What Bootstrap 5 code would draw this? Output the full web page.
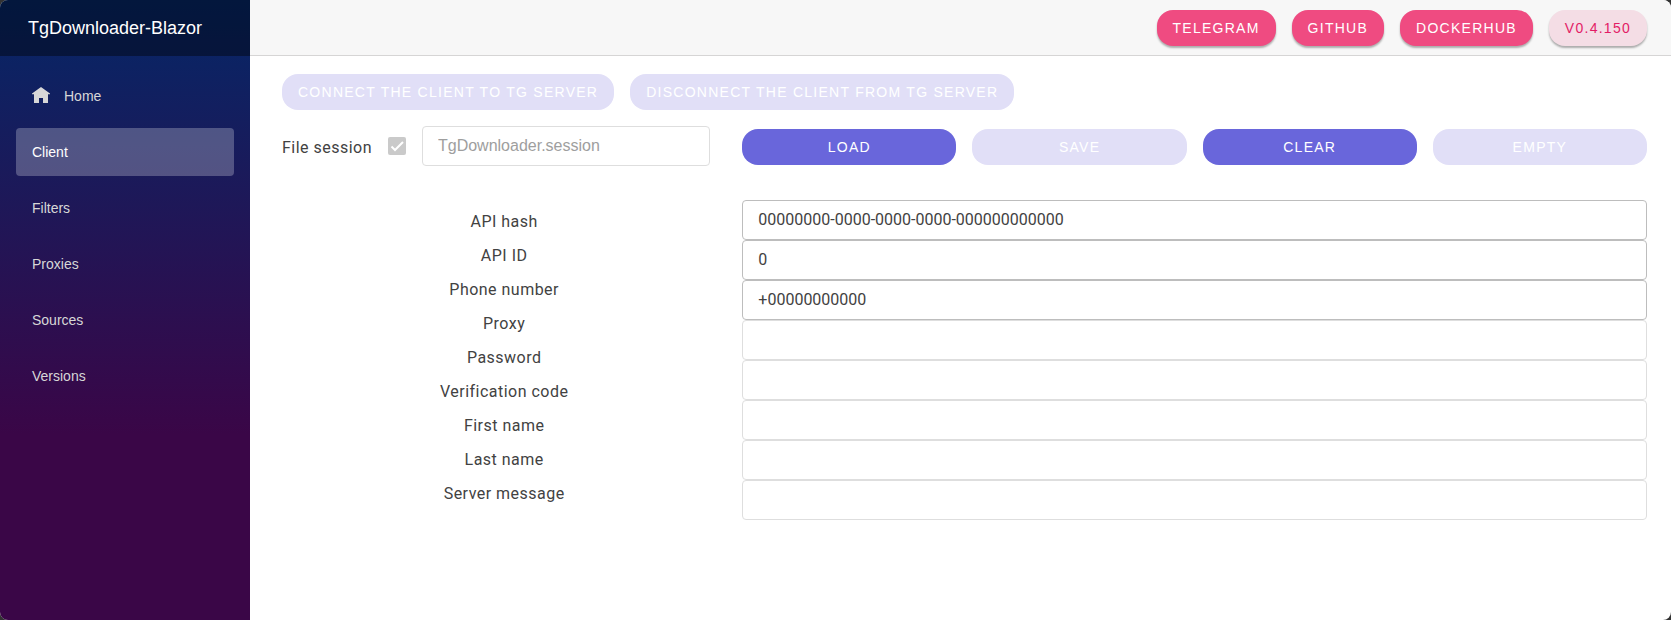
<!DOCTYPE html>
<html lang="en">
<head>
<meta charset="utf-8">
<meta name="viewport" content="width=device-width, initial-scale=1">
<title>TgDownloader-Blazor</title>
<link href="https://cdn.jsdelivr.net/npm/bootstrap@5.3.0/dist/css/bootstrap.min.css" rel="stylesheet">
<style>
  html { background: #333; }
  body { background: transparent; color: #424242; font-family: "Liberation Sans", Arial, sans-serif; }
  .shell { background: #fff; border-radius: 8px; overflow: hidden; }
  .sidebar { width: 250px; background: linear-gradient(180deg, #052767 0%, #3a0647 70%); }
  .brand-bar { height: 56px; padding: 0 28px; background: rgba(0, 0, 0, .4); font-size: 18px; }
  .side-link { height: 48px; gap: 14px; padding: 0 16px; border-radius: 4px; color: #d7d7d7; font-size: 14px; }
  .side-link:hover { color: #fff; background: rgba(255, 255, 255, .1); }
  .side-link.active { color: #fff; background: rgba(255, 255, 255, .25); }
  .top-bar { height: 56px; padding: 0 24px 0 32px; background: #f7f7f7; border-bottom: 1px solid #d6d5d5; }
  .content { padding: 18px 24px 32px 32px; }
  .pill { height: 36px; padding: 0 16px; border: 0; border-radius: 16px; font-size: 14px; line-height: 36px; letter-spacing: .09em; text-transform: uppercase; }
  .pill-link { --bs-btn-color: #fff; --bs-btn-bg: #ef4b81; --bs-btn-hover-color: #fff; --bs-btn-hover-bg: #e0366f; box-shadow: 0 2px 2px rgba(0, 0, 0, .3); }
  .pill-version { --bs-btn-color: #e31c65; --bs-btn-bg: #f4dde5; --bs-btn-hover-color: #e31c65; --bs-btn-hover-bg: #f0cfdb; box-shadow: 0 2px 2px rgba(0, 0, 0, .3); }
  .pill-main { --bs-btn-color: #fff; --bs-btn-bg: #6966db; --bs-btn-hover-color: #fff; --bs-btn-hover-bg: #5552c9; --bs-btn-disabled-color: #fff; --bs-btn-disabled-bg: #e1dff7; --bs-btn-disabled-opacity: 1; }
  .session-actions { padding-top: 3px; }
  .session-caption { padding-top: 3px; }
  .caption { font-family: Roboto, sans-serif; font-size: 16px; line-height: 34px; letter-spacing: .03em; }
  .caption-list { padding-top: 5px; }
  .field { height: 40px; padding: 0 15px 2px; border: 1px solid #bdbdbd; border-radius: 4px; color: #424242; font-family: Roboto, sans-serif; font-size: 16px; }
  .field:disabled { background: #fff; border-color: #dedede; color: #9e9e9e; }
  .field-file { padding-bottom: 0; font-family: "Liberation Sans", Arial, sans-serif; }
  .tick.form-check-input { width: 18px; height: 18px; border: 0; border-radius: 2px; }
  .tick.form-check-input:checked { background-color: #cacaca; background-size: 18px 18px; background-image: url("data:image/svg+xml,%3csvg xmlns='http://www.w3.org/2000/svg' viewBox='0 0 18 18'%3e%3cpath fill='none' stroke='%23fff' stroke-width='2' d='M3.5 9.5 7 13 15 5'/%3e%3c/svg%3e"); }
  .tick.form-check-input:disabled { opacity: 1; }
  .form-area { margin-top: 34px; }
</style>
</head>
<body>
<div class="shell d-flex min-vh-100">
  <aside class="sidebar flex-shrink-0">
    <div class="brand-bar d-flex align-items-center">
      <a class="text-white text-decoration-none" href="#">TgDownloader-Blazor</a>
    </div>
    <nav class="nav flex-column gap-2 p-3">
      <a class="side-link d-flex align-items-center text-decoration-none" href="#">
        <svg width="18" height="18" viewBox="0 0 18 18" fill="currentColor" aria-hidden="true"><path d="M9 0 0 6.5V7.2H2V16H7V11H11V16H16V7.2H18V6.5Z"/></svg>
        Home
      </a>
      <a class="side-link active d-flex align-items-center text-decoration-none" href="#" aria-current="page">Client</a>
      <a class="side-link d-flex align-items-center text-decoration-none" href="#">Filters</a>
      <a class="side-link d-flex align-items-center text-decoration-none" href="#">Proxies</a>
      <a class="side-link d-flex align-items-center text-decoration-none" href="#">Sources</a>
      <a class="side-link d-flex align-items-center text-decoration-none" href="#">Versions</a>
    </nav>
  </aside>
  <main class="flex-grow-1">
    <header class="top-bar d-flex align-items-center justify-content-end gap-3">
      <a class="btn pill pill-link" href="#">Telegram</a>
      <a class="btn pill pill-link" href="#">GitHub</a>
      <a class="btn pill pill-link" href="#">DockerHub</a>
      <a class="btn pill pill-version" href="#">v0.4.150</a>
    </header>
    <form class="content">
      <div class="d-flex flex-wrap gap-3 mb-3">
        <button class="btn pill pill-main" type="button" disabled>Connect the client to TG server</button>
        <button class="btn pill pill-main" type="button" disabled>Disconnect the client from TG server</button>
      </div>
      <div class="row gx-3">
        <div class="col-4">
          <div class="d-flex align-items-center gap-3 pe-3">
            <label class="caption session-caption text-nowrap" for="useSession">File session</label>
            <input class="tick form-check-input flex-shrink-0 m-0" type="checkbox" id="useSession" checked disabled>
            <input class="form-control field field-file" type="text" value="TgDownloader.session" aria-label="Session file" disabled>
          </div>
        </div>
        <div class="col-8 session-actions">
          <div class="row gx-3 row-cols-4">
            <div class="col"><button class="btn pill pill-main w-100" type="button">Load</button></div>
            <div class="col"><button class="btn pill pill-main w-100" type="button" disabled>Save</button></div>
            <div class="col"><button class="btn pill pill-main w-100" type="button">Clear</button></div>
            <div class="col"><button class="btn pill pill-main w-100" type="button" disabled>Empty</button></div>
          </div>
        </div>
      </div>
      <div class="form-area row gx-3">
        <div class="caption-list col-4 d-flex flex-column align-items-center">
          <label class="caption" for="apiHash">API hash</label>
          <label class="caption" for="apiId">API ID</label>
          <label class="caption" for="phone">Phone number</label>
          <span class="caption">Proxy</span>
          <label class="caption" for="password">Password</label>
          <label class="caption" for="code">Verification code</label>
          <label class="caption" for="firstName">First name</label>
          <label class="caption" for="lastName">Last name</label>
          <label class="caption" for="serverMessage">Server message</label>
        </div>
        <div class="col-8">
          <input class="form-control field" type="text" id="apiHash" value="00000000-0000-0000-0000-000000000000">
          <input class="form-control field" type="text" id="apiId" value="0">
          <input class="form-control field" type="text" id="phone" value="+00000000000">
          <input class="form-control field" type="text" id="password" disabled>
          <input class="form-control field" type="text" id="code" disabled>
          <input class="form-control field" type="text" id="firstName" disabled>
          <input class="form-control field" type="text" id="lastName" disabled>
          <input class="form-control field" type="text" id="serverMessage" disabled>
        </div>
      </div>
    </form>
  </main>
</div>
<script src="https://cdn.jsdelivr.net/npm/bootstrap@5.3.0/dist/js/bootstrap.bundle.min.js"></script>
</body>
</html>
